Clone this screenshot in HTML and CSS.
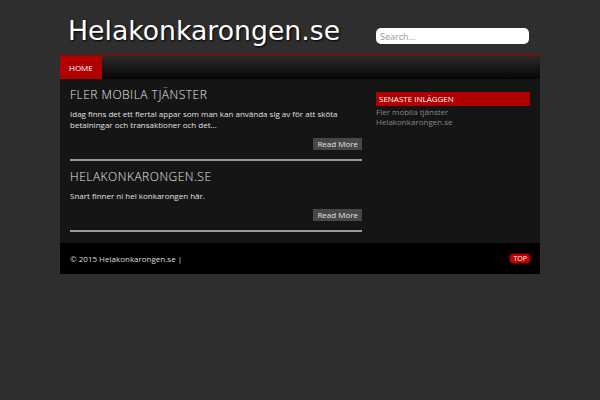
FILE: index.html
```html
<!DOCTYPE html>
<html lang="sv">
<head>
<meta charset="utf-8">
<title>Helakonkarongen.se</title>
<link rel="stylesheet" href="styles.css">
</head>
<body>
<div class="wrap">
  <header class="header">
    <h1 class="logo">Helakonkarongen.se</h1>
    <input class="search" type="text" placeholder="Search...">
  </header>
  <nav class="nav">
    <a class="nav-item active" href="#">HOME</a>
  </nav>
  <div class="main">
    <div class="content">
      <article class="post">
        <h2 class="post-title">FLER MOBILA TJÄNSTER</h2>
        <p class="post-text">Idag finns det ett flertal appar som man kan använda sig av för att sköta betalningar och transaktioner och det…</p>
        <div class="more-row"><a class="more" href="#">Read More</a></div>
      </article>
      <article class="post">
        <h2 class="post-title">HELAKONKARONGEN.SE</h2>
        <p class="post-text">Snart finner ni hel konkarongen här.</p>
        <div class="more-row"><a class="more" href="#">Read More</a></div>
      </article>
    </div>
    <aside class="sidebar">
      <h3 class="widget-title">SENASTE INLÄGGEN</h3>
      <ul class="widget-list">
        <li><a href="#">Fler mobila tjänster</a></li>
        <li><a href="#">Helakonkarongen.se</a></li>
      </ul>
    </aside>
  </div>
  <footer class="footer">
    <span class="copy">© 2015 Helakonkarongen.se |</span>
    <a class="top" href="#">TOP</a>
  </footer>
</div>
</body>
</html>
```
FILE: styles.css
```css
html, body {
  margin: 0;
  padding: 0;
  background: #2e2e2e;
  font-family: "Open Sans", "DejaVu Sans", sans-serif;
}
.wrap {
  width: 480px;
  margin: 0 auto;
}
.header {
  height: 54px;
  display: flex;
  justify-content: space-between;
  align-items: flex-start;
  padding: 0 11px 0 8px;
  box-sizing: border-box;
}
.logo {
  margin: 15px 0 0 0;
  font-family: "DejaVu Sans", sans-serif;
  font-weight: normal;
  font-size: 26.7px;
  line-height: 32px;
  color: #fff;
  text-shadow: 1px 1px 2px #000;
}
.search {
  margin-top: 28px;
  width: 153px;
  height: 16px;
  box-sizing: border-box;
  border: none;
  border-radius: 5px;
  background: #fff;
  padding: 0 4px;
  font-family: "Open Sans", sans-serif;
  font-size: 9px;
  outline: none;
}
.search::placeholder { color: #999; }
.nav {
  display: flex;
  border-top: 2px solid #6a1313;
  height: 23px;
  background: linear-gradient(#2a2a2a, #060606);
}
.nav-item {
  display: flex;
  align-items: center;
  padding: 0 9px;
  font-size: 8px;
  color: #fff;
  text-decoration: none;
}
.nav-item.active { background: #b00000; }
.main {
  display: flex;
  background: #151515;
  padding: 8px 10px 11px 10px;
  gap: 14px;
}
.content {
  width: 292px;
}
.post {
  border-bottom: 2px solid #9a9a9a;
  padding-bottom: 9px;
  margin-bottom: 8px;
}
.post:last-child { margin-bottom: 0; }
.post-title {
  margin: 0;
  font-weight: 300;
  font-size: 12px;
  letter-spacing: 0.5px;
  color: #e8e8e8;
  line-height: 16px;
}
.post-text {
  margin: 5px 0 0 0;
  font-size: 8px;
  line-height: 11px;
  color: #e0e0e0;
}
.more-row {
  display: flex;
  justify-content: flex-end;
  margin-top: 8px;
}
.more {
  background: #474747;
  color: #e0e0e0;
  font-size: 8px;
  line-height: 12px;
  padding: 0 4px;
  text-decoration: none;
}
.sidebar {
  width: 154px;
  padding-top: 5px;
}
.widget-title {
  margin: 0;
  background: #b00000;
  color: #fff;
  font-weight: normal;
  font-size: 8px;
  line-height: 14px;
  padding: 0 3px;
}
.widget-list {
  list-style: none;
  margin: 1px 0 0 0;
  padding: 0;
}
.widget-list li {
  font-size: 8px;
  line-height: 10px;
}
.widget-list a { color: #888; text-decoration: none; }
.footer {
  background: #000;
  height: 31px;
  display: flex;
  align-items: center;
  justify-content: space-between;
  padding: 0 10px;
}
.copy {
  color: #ddd;
  font-size: 8px;
}
.top {
  background: #c00000;
  color: #fff;
  font-size: 7px;
  line-height: 9px;
  padding: 0 3px;
  border-radius: 4px;
  text-decoration: none;
  box-shadow: 0 0 2px #f00;
}
```
